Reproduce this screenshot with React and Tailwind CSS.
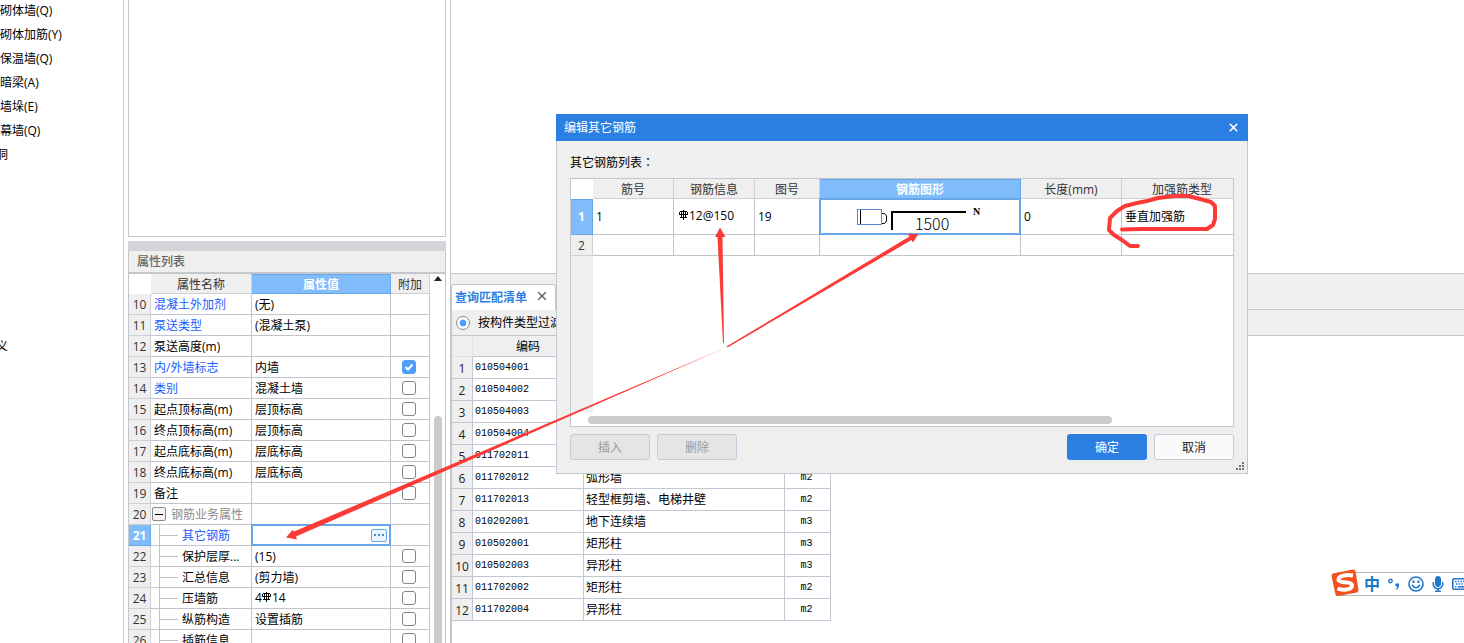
import { useState } from "react";
import { FaMicrophone } from "react-icons/fa";
import { FiX } from "react-icons/fi";

const navItems = [
  "砌体墙(Q)",
  "砌体加筋(Y)",
  "保温墙(Q)",
  "暗梁(A)",
  "墙垛(E)",
  "幕墙(Q)",
];

const properties = [
  { id: 10, name: "混凝土外加剂", value: "(无)", link: true },
  { id: 11, name: "泵送类型", value: "(混凝土泵)", link: true },
  { id: 12, name: "泵送高度(m)", value: "" },
  { id: 13, name: "内/外墙标志", value: "内墙", link: true, check: true, on: true },
  { id: 14, name: "类别", value: "混凝土墙", link: true, check: true },
  { id: 15, name: "起点顶标高(m)", value: "层顶标高", check: true },
  { id: 16, name: "终点顶标高(m)", value: "层顶标高", check: true },
  { id: 17, name: "起点底标高(m)", value: "层底标高", check: true },
  { id: 18, name: "终点底标高(m)", value: "层底标高", check: true },
  { id: 19, name: "备注", value: "", check: true },
  { id: 20, name: "钢筋业务属性", value: "", group: true },
  { id: 21, name: "其它钢筋", value: "", link: true, child: true, selected: true },
  { id: 22, name: "保护层厚...", value: "(15)", child: true, check: true },
  { id: 23, name: "汇总信息", value: "(剪力墙)", child: true, check: true },
  { id: 24, name: "压墙筋", value: "14", prefix: "4", rebar: true, child: true, check: true },
  { id: 25, name: "纵筋构造", value: "设置插筋", child: true, check: true },
  { id: 26, name: "插筋信息", value: "", child: true, check: true },
];

const billItems = [
  { code: "010504001" },
  { code: "010504002" },
  { code: "010504003" },
  { code: "010504004" },
  { code: "011702011" },
  { code: "011702012", name: "弧形墙", unit: "m2" },
  { code: "011702013", name: "轻型框剪墙、电梯井壁", unit: "m2" },
  { code: "010202001", name: "地下连续墙", unit: "m3" },
  { code: "010502001", name: "矩形柱", unit: "m3" },
  { code: "010502003", name: "异形柱", unit: "m3" },
  { code: "011702002", name: "矩形柱", unit: "m2" },
  { code: "011702004", name: "异形柱", unit: "m2" },
];

const RebarMark = () => (
  <svg width="10" height="14" viewBox="0 0 10 14" className="inline-block shrink-0" fill="none" stroke="#000">
    <path d="M4.500 1V11M1 2.500H8M0 5.500H9M1 8.500H8M2.500 2V9M6.500 2V9M0.500 3V5M8.500 3V5" />
  </svg>
);

const Checkbox = ({ label, defaultChecked }) => {
  const [checked, setChecked] = useState(Boolean(defaultChecked));

  return (
    <label className="relative ml-[11px] block size-3.5">
      <input
        type="checkbox"
        aria-label={label}
        checked={checked}
        onChange={(e) => setChecked(e.target.checked)}
        className="block size-3.5 appearance-none rounded-[3px] border border-[#858585] bg-white checked:border-[#4f9ffa] checked:bg-[#4f9ffa]"
      />
      {checked && (
        <svg viewBox="0 0 14 14" className="pointer-events-none absolute inset-0" fill="none" stroke="#fff" strokeWidth="2">
          <path d="M3.5 7L6 9.5L10.5 4.5" />
        </svg>
      )}
    </label>
  );
};

const PropertyName = ({ row }) => {
  if (row.group) {
    return (
      <div className="flex h-5 items-center gap-[5px] pl-px text-[#8c8c8c]">
        <button
          type="button"
          aria-label="折叠"
          className="flex size-3.5 items-center justify-center rounded-xs border border-[#8a8a8a] bg-[#f4f4f4]"
        >
          <span className="h-px w-2 bg-black" />
        </button>
        <span className="pt-0.5">{row.name}</span>
      </div>
    );
  }

  if (row.child) {
    return (
      <div className="flex h-5 items-center pl-2">
        <span className="mr-1 flex w-[19px] items-center self-stretch border-l border-[#c3c3cb]">
          <span className="h-px w-full bg-[#c3c3cb]" />
        </span>
        <span className={row.link ? "pt-0.5 text-[#1a5cff]" : "pt-0.5"}>{row.name}</span>
      </div>
    );
  }

  return <div className={row.link ? "pt-0.5 pl-[3px] text-[#1a5cff]" : "pt-0.5 pl-[3px]"}>{row.name}</div>;
};

const PropertyPanel = () => (
  <section className="flex w-[318px] shrink-0 flex-col">
    <div className="h-[237px] shrink-0 border border-t-0 border-[#c3c7cb]" />
    <div className="mt-1 h-2.5 shrink-0 bg-[#d2d4d9]" />
    <div className="flex min-h-0 flex-1 flex-col border-x border-[#c3c7cb]">
      <h2 className="h-[23px] shrink-0 border-b-2 border-[#c3c7cb] bg-[#efefef] pl-2 font-medium leading-[22px] text-[#666]">
        属性列表
      </h2>
      <div className="flex min-h-0 flex-1 overflow-hidden">
        <table className="h-fit w-[301px] table-fixed border-separate border-spacing-0 leading-4">
          <colgroup>
            <col className="w-[22px]" />
            <col className="w-[101px]" />
            <col className="w-[139px]" />
            <col className="w-[39px]" />
          </colgroup>
          <thead>
            <tr className="h-5 text-[#333]">
              <th className="bg-white p-0" />
              <th className="border-r border-b border-[#d0d0d4] bg-[#efefef] p-0 pt-0.5 font-normal">属性名称</th>
              <th className="border border-l-0 border-[#68a6ea] bg-[#80bbfa] p-0 pt-0.5 font-bold text-white">属性值</th>
              <th className="border-r border-b border-[#d0d0d4] bg-[#efefef] p-0 pt-0.5 font-normal">附加</th>
            </tr>
          </thead>
          <tbody>
            {properties.map((row) => (
              <tr key={row.id} className="h-[21px]">
                <td
                  className={
                    row.selected
                      ? "border-r border-b border-[#68a6ea] bg-[#80bbfa] p-0 pt-0.5 text-center font-bold text-white"
                      : "border-r border-b border-[#d0d0d4] bg-[#efefef] p-0 pt-0.5 text-center text-[#333]"
                  }
                >
                  {row.id}
                </td>
                <td className="border-r border-b border-[#c3c3cb] p-0 whitespace-nowrap">
                  <PropertyName row={row} />
                </td>
                <td className="relative border-r border-b border-[#c3c3cb] p-0 pl-[3px] whitespace-nowrap">
                  {row.selected ? (
                    <div className="absolute -inset-px flex items-center border-2 border-[#68a6ea] bg-white pr-0.5">
                      <input aria-label={row.name} className="min-w-0 flex-1 outline-none" />
                      <button
                        type="button"
                        aria-label="编辑"
                        className="flex h-[13px] w-4 items-center justify-center gap-0.5 rounded-xs border border-[#68a6ea] bg-[#eaf4ff]"
                      >
                        <span className="size-0.5 bg-[#4b87c8]" />
                        <span className="size-0.5 bg-[#4b87c8]" />
                        <span className="size-0.5 bg-[#4b87c8]" />
                      </button>
                    </div>
                  ) : (
                    <div className={row.rebar ? "flex items-center" : "pt-0.5"}>
                      {row.prefix}
                      {row.rebar && <RebarMark />}
                      {row.value}
                    </div>
                  )}
                </td>
                <td className="border-r border-b border-[#c3c3cb] p-0">
                  {row.check && <Checkbox label={row.name} defaultChecked={row.on} />}
                </td>
              </tr>
            ))}
          </tbody>
        </table>
        <div className="flex flex-1 flex-col items-center pt-0.5">
          <svg width="8" height="5" viewBox="0 0 8 5" className="shrink-0">
            <path d="M0 5L4 0L8 5Z" fill="#222" />
          </svg>
          <div className="mt-[135px] w-2 flex-1 rounded-t-full bg-[#cbcbcb]" />
        </div>
      </div>
    </div>
  </section>
);

const BillPanel = () => (
  <main className="ml-1 flex min-w-0 flex-1 flex-col border-l border-[#c3c7cb]">
    <div className="h-[274px] shrink-0 border-b border-[#c3c7cb]" />
    <div className="flex h-9 shrink-0 items-end border-b border-[#c3c7cb] bg-[#efefef]">
      <div className="-mb-px flex h-[26px] w-[105px] items-center justify-between rounded-t-[3px] border border-b-0 border-[#c3c7cb] bg-white pr-1.5 pl-[3px]">
        <span className="font-bold text-[#2b7fe3]">查询匹配清单</span>
        <button type="button" aria-label="关闭标签" className="pb-1">
          <FiX size={14} color="#555" />
        </button>
      </div>
    </div>
    <div className="flex h-[26px] shrink-0 items-center border-b border-l border-[#c3c7cb] bg-[#efefef] pl-1">
      <label className="flex items-center gap-2 whitespace-nowrap">
        <input
          type="radio"
          name="filter"
          defaultChecked
          className="size-3.5 appearance-none rounded-full border border-[#8a8a8a] bg-white bg-radial from-[#4f9ffa] from-35% to-white to-45%"
        />
        按构件类型过滤
      </label>
    </div>
    <div className="min-h-0 flex-1 border-l border-[#c3c7cb]">
      <table className="w-[379px] table-fixed border-separate border-spacing-0 leading-4">
        <colgroup>
          <col className="w-[21px]" />
          <col className="w-[111px]" />
          <col className="w-[201px]" />
          <col className="w-[46px]" />
        </colgroup>
        <thead>
          <tr className="h-[21px] bg-[#efefef]">
            <th className="border-r border-b border-[#e2e2e2] p-0" />
            <th className="border-r border-b border-[#c3c7d3] p-0 pt-0.5 font-normal">编码</th>
            <th className="border-r border-b border-[#c3c7d3] p-0" />
            <th className="border-r border-b border-[#c3c7d3] p-0" />
          </tr>
        </thead>
        <tbody>
          {billItems.map((item, index) => (
            <tr key={item.code} className="h-[22px]">
              <td className="border-r border-b border-[#c3c7d3] bg-[#efefef] p-0 pt-0.5 text-center text-[#222]">
                {index + 1}
              </td>
              <td className="border-r border-b border-[#c3c7d3] p-0 pl-0.5 font-['Liberation_Mono','Noto_Sans_CJK_SC',monospace] text-[10px]">
                {item.code}
              </td>
              <td className="border-r border-b border-[#c3c7d3] p-0 pl-0.5">{item.name}</td>
              <td className="border-r border-b border-[#c3c7d3] p-0 pr-0.5 text-center font-['Liberation_Mono','Noto_Sans_CJK_SC',monospace] text-[10px]">
                {item.unit}
              </td>
            </tr>
          ))}
        </tbody>
      </table>
    </div>
  </main>
);

const ShapeDrawing = () => (
  <svg width="200" height="35" viewBox="0 0 200 35" className="block" fill="none">
    <rect x="37.5" y="10.5" width="24" height="15" stroke="#5b86cf" />
    <path d="M40.5 11V25" stroke="#000" />
    <path d="M62 14.5H64.5L66.5 17V22L64.5 24.5H62" stroke="#000" />
    <path d="M72 31V13H146" stroke="#000" strokeWidth="2" />
    <text x="95" y="31" fontSize="16" fontWeight="300" fill="#000" className="font-['Noto_Sans_CJK_SC',sans-serif]">
      1500
    </text>
    <text x="153" y="16" fontSize="10" fontWeight="700" fill="#000" className="font-['Liberation_Serif',serif]">
      N
    </text>
  </svg>
);

const headCell = "border-r border-b border-[#d0d0d4] bg-[#efefef] p-0 pt-0.5 font-normal text-[#333]";
const bodyCell = "border-r border-b border-[#c3c3cb] bg-white p-0 pl-[3px]";

const RebarDialog = () => (
  <div
    role="dialog"
    aria-label="编辑其它钢筋"
    className="absolute top-[114px] left-[556px] flex h-[360px] w-[692px] flex-col bg-[#efefef]"
  >
    <header className="flex h-[27px] shrink-0 items-center justify-between bg-[#2b7fe3] pr-2 pl-2 text-white">
      <h1>编辑其它钢筋</h1>
      <button type="button" aria-label="关闭">
        <FiX size={13} strokeWidth={3} />
      </button>
    </header>
    <div className="flex min-h-0 flex-1 flex-col border border-t-0 border-[#bfc7d1] px-[13px] pb-[13px]">
      <p className="h-[37px] shrink-0 pt-2.5 leading-[21px]">
        其它钢筋列表<span className="font-['Noto_Sans_CJK_TC',sans-serif]">：</span>
      </p>
      <div className="flex min-h-0 flex-1 flex-col overflow-hidden border border-[#c3c7cb] bg-white">
        <table className="w-[672px] shrink-0 table-fixed border-separate border-spacing-0 leading-4">
          <colgroup>
            <col className="w-[22px]" />
            <col className="w-[81px]" />
            <col className="w-[81px]" />
            <col className="w-[65px]" />
            <col className="w-[201px]" />
            <col className="w-[101px]" />
            <col className="w-[121px]" />
          </colgroup>
          <thead>
            <tr className="h-5">
              <th className="bg-white p-0" />
              <th className={headCell}>筋号</th>
              <th className={headCell}>钢筋信息</th>
              <th className={headCell}>图号</th>
              <th className="border border-l-0 border-[#68a6ea] bg-[#80bbfa] p-0 pt-0.5 font-bold text-white">钢筋图形</th>
              <th className={headCell}>长度(mm)</th>
              <th className={headCell}>加强筋类型</th>
            </tr>
          </thead>
          <tbody>
            <tr className="h-9">
              <td className="border border-l-0 border-[#68a6ea] bg-[#80bbfa] p-0 text-center font-bold text-white">1</td>
              <td className={bodyCell}>1</td>
              <td className={bodyCell}>
                <div className="flex items-center pb-0.5 pl-0.5">
                  <RebarMark />
                  12@150
                </div>
              </td>
              <td className={bodyCell}>19</td>
              <td className="relative border-r border-b border-[#c3c3cb] p-0">
                <ShapeDrawing />
                <div className="absolute -inset-px border-2 border-[#68a6ea]" />
              </td>
              <td className={bodyCell}>0</td>
              <td className={bodyCell}>垂直加强筋</td>
            </tr>
            <tr className="h-[21px]">
              <td className="border-r border-b border-[#d0d0d4] bg-[#efefef] p-0 pt-0.5 text-center text-[#333]">2</td>
              <td className={bodyCell} />
              <td className={bodyCell} />
              <td className={bodyCell} />
              <td className={bodyCell} />
              <td className={bodyCell} />
              <td className={bodyCell} />
            </tr>
          </tbody>
        </table>
        <div className="w-[22px] flex-1 bg-[#efefef]" />
        <div className="mt-1 mb-0.5 ml-[17px] h-2 w-[524px] shrink-0 rounded-full bg-[#cbcbcb]" />
      </div>
      <footer className="mt-[7px] flex h-[26px] shrink-0 gap-[7px]">
        <button type="button" disabled className="w-20 rounded-[3px] border border-[#c3cada] bg-[#e5e5e5] pt-0.5 text-[#999]">
          插入
        </button>
        <button type="button" disabled className="w-20 rounded-[3px] border border-[#c3cada] bg-[#e5e5e5] pt-0.5 text-[#999]">
          删除
        </button>
        <button type="button" className="ml-auto w-20 rounded-[3px] bg-[#2b7fe3] pt-0.5 text-white">
          确定
        </button>
        <button type="button" className="w-20 rounded-[3px] border border-[#c3cada] bg-[#fafafa] pt-0.5 text-[#222]">
          取消
        </button>
      </footer>
    </div>
    <svg width="8" height="8" viewBox="0 0 8 8" className="absolute right-1 bottom-1" fill="#6f757c">
      <path d="M6 0h2v2h-2zM3 3h2v2h-2zM6 3h2v2h-2zM0 6h2v2h-2zM3 6h2v2h-2zM6 6h2v2h-2z" />
    </svg>
  </div>
);

// red pen marks drawn over everything
const Annotations = () => (
  <svg width="1464" height="643" viewBox="0 0 1464 643" className="pointer-events-none absolute top-0 left-0" fill="#fc3a38">
    <path d="M720 227.5L725.5 237H722.5L724 343H723L717.5 237H715Z" />
    <path d="M918.5 234L913 242.5L911.5 240L727.5 347.5L726.5 346.5L909.5 236.5L907.5 234Z" />
    <path d="M286 537.5L292.500 530L294 531.500L727 347L296 536.500L297 539.500Z" />
    <path
      d="M1122 229.5L1140 229H1207L1213 225L1215 219V206L1211 202L1200 199L1188 196L1175 196L1158 198L1147 201L1137 203L1125 206L1117 211L1110 218L1109 230L1114 235L1122 240L1130 246H1138"
      fill="none"
      stroke="#fc3a38"
      strokeWidth="4"
      strokeLinecap="round"
      strokeLinejoin="round"
    />
  </svg>
);

const ImeBar = () => (
  <div className="absolute top-[572px] right-0 flex h-6 w-[127px] items-center overflow-x-clip border-y border-[#b5b5b9] bg-white pl-[27px] text-[#1f76cb]">
    <span className="w-4 shrink-0 text-center text-base leading-5 font-bold">中</span>
    <svg width="12" height="12" viewBox="0 0 12 12" className="ml-2 shrink-0" fill="none" stroke="currentColor">
      <circle cx="2.500" cy="3" r="1.700" strokeWidth="1.400" />
      <path d="M7.500 5.500h3.500v3q-0.500 2.500-3 3v-1q1.500-0.700 1.500-2h-2z" fill="currentColor" stroke="none" />
    </svg>
    <svg width="16" height="16" viewBox="0 0 16 16" className="ml-2 shrink-0" fill="none" stroke="currentColor" strokeWidth="1.600">
      <circle cx="8" cy="8" r="7" />
      <path d="M4 9Q8 14.500 12 9" />
      <path d="M5.500 4.500V7M10.500 4.500V7" strokeWidth="2" />
    </svg>
    <FaMicrophone size={16} className="ml-1.5 shrink-0" />
    <svg width="18" height="12" viewBox="0 0 18 12" className="ml-1.5 shrink-0" fill="none" stroke="currentColor">
      <rect x="0.800" y="0.800" width="16.400" height="10.400" rx="1.500" strokeWidth="1.600" />
      <path d="M3 3.500H15M4 6H15" strokeWidth="1.500" strokeDasharray="1.500 1.200" />
      <path d="M3 8.700H4.500M6 8.700H12M13.500 8.700H15" strokeWidth="1.500" />
    </svg>
  </div>
);

const SogouLogo = () => (
  <svg width="30" height="30" viewBox="0 0 30 30" className="absolute top-[568px] right-[104px]">
    <path d="M3 5.500L23 1.500Q25 1 25.500 3L28.500 22Q28.500 24 27 24.500L8 28Q6 28.500 5.500 26.500L1.500 8Q1 6 3 5.500Z" fill="#f4511e" />
    <path
      d="M23 7.500C17 6 8 8 8.500 12C9 15.500 22 13 22 17.500C22 22 12 22.500 7.500 20.500"
      fill="none"
      stroke="#fff"
      strokeWidth="4"
    />
  </svg>
);

const App = () => (
  <div className="relative flex h-screen overflow-hidden bg-white font-['Open_Sans','Noto_Sans_CJK_SC',sans-serif] text-xs text-black">
    <nav className="mr-1 w-31 shrink-0 overflow-hidden border-r border-[#c3c7cb]">
      <ul className="-mt-px leading-6">
        {navItems.map((item) => (
          <li key={item}>{item}</li>
        ))}
        <li className="-ml-1">洞</li>
        <li className="-ml-1 pt-42">义</li>
      </ul>
    </nav>
    <PropertyPanel />
    <BillPanel />
    <RebarDialog />
    <ImeBar />
    <SogouLogo />
    <Annotations />
  </div>
);

export default App;
